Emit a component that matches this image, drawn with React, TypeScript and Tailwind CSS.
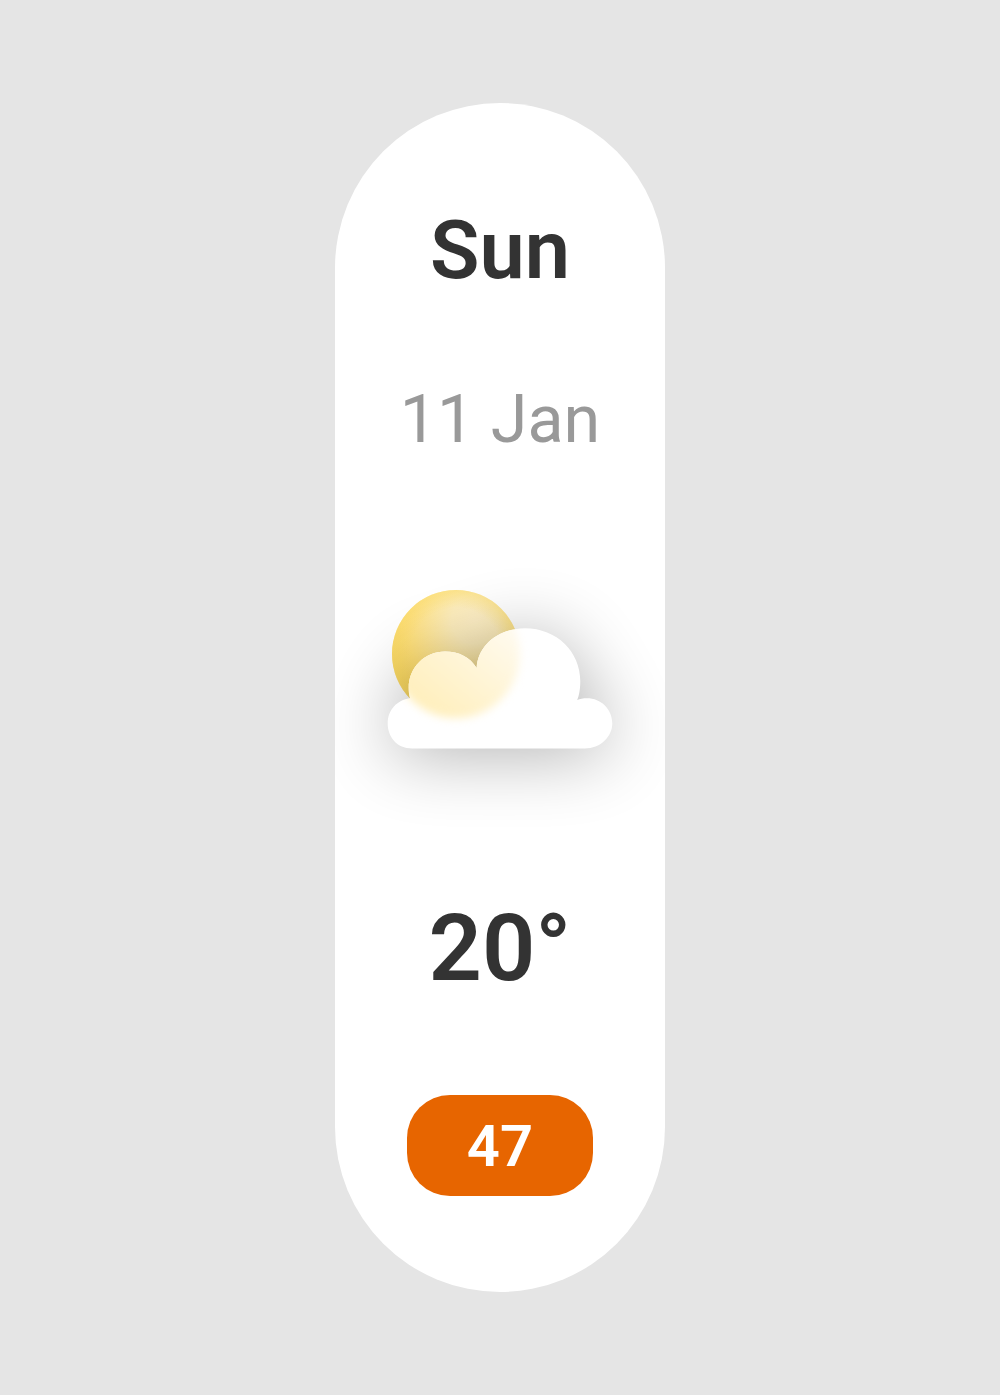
const CLOUD =
  "M412 748.500C397 748.500 387.700 737 387.700 723.500C387.700 710 397 700 410 698.300C409 695 408.700 691.500 408.700 688C408.700 667 425 651.500 445 651.500C459 651.500 470 657 476.700 668C477.500 645 499 628.200 525 628.200C557 628.200 580.300 652 580.300 681C580.300 689 579 696 577.200 700C580 698.700 583 698.200 587 698.200C601 698.200 612.300 709 612.300 723.500C612.300 737 600 748.500 585 748.500Z";

export default function App() {
  return (
    <main className="flex h-[1395px] w-[1000px] justify-center bg-[#e5e5e5] pt-[102.500px] font-['Roboto',sans-serif]">
      <section className="flex h-[1189px] w-[330.500px] flex-col items-center overflow-hidden rounded-full bg-white">
        <h1 className="mt-[100px] h-[96px] text-[81px] leading-[96px] font-semibold text-[#333]">Sun</h1>
        <p className="mt-[82px] h-[77px] text-[66.400px] leading-[77px] whitespace-nowrap text-[#999]">11 Jan</p>
        <svg className="mt-[102.500px] h-[270px] w-[330px] shrink-0 overflow-visible" viewBox="335 560 330 270" role="img" aria-label="Partly cloudy">
          <defs>
            <radialGradient id="sun" cx="475" cy="620" r="94" gradientUnits="userSpaceOnUse">
              <stop stopColor="#fff0c6" />
              <stop offset=".25" stopColor="#feeebd" />
              <stop offset=".75" stopColor="#ffe078" />
              <stop offset="1" stopColor="#fad75c" />
            </radialGradient>
            <radialGradient id="rim" cx="456" cy="654" r="64" gradientUnits="userSpaceOnUse">
              <stop offset=".72" stopColor="#fbdc6c" stopOpacity="0" />
              <stop offset="1" stopColor="#fbdc6c" stopOpacity=".5" />
            </radialGradient>
            <linearGradient id="glass" x1="500" y1="625" x2="430" y2="710" gradientUnits="userSpaceOnUse">
              <stop stopColor="#fffaed" />
              <stop offset="1" stopColor="#ffefbd" />
            </linearGradient>
            <clipPath id="cloudClip"><path d={CLOUD} /></clipPath>
            <filter id="shadow" x="200" y="430" width="600" height="540" filterUnits="userSpaceOnUse" colorInterpolationFilters="sRGB"><feGaussianBlur stdDeviation="36" /></filter>
            <filter id="soft" x="370" y="570" width="180" height="180" filterUnits="userSpaceOnUse" colorInterpolationFilters="sRGB"><feGaussianBlur stdDeviation="4.500" /></filter>
          </defs>
          <circle cx="456" cy="654" r="64" fill="url(#sun)" />
          <circle cx="456" cy="654" r="64" fill="url(#rim)" />
          <path d={CLOUD} transform="translate(0 6)" opacity=".3" filter="url(#shadow)" />
          <path d={CLOUD} fill="white" />
          <g clipPath="url(#cloudClip)"><circle cx="456" cy="654" r="64" fill="url(#glass)" filter="url(#soft)" /></g>
        </svg>
        <p className="mt-[63px] h-[110px] text-[93.500px] leading-[110px] font-semibold text-[#333]">20°</p>
        <div className="mt-[92px] flex h-[101px] w-[186px] shrink-0 items-center justify-center rounded-[43px] bg-[#e76500] pt-[2px] text-[58px] font-semibold text-white">47</div>
      </section>
    </main>
  );
}
